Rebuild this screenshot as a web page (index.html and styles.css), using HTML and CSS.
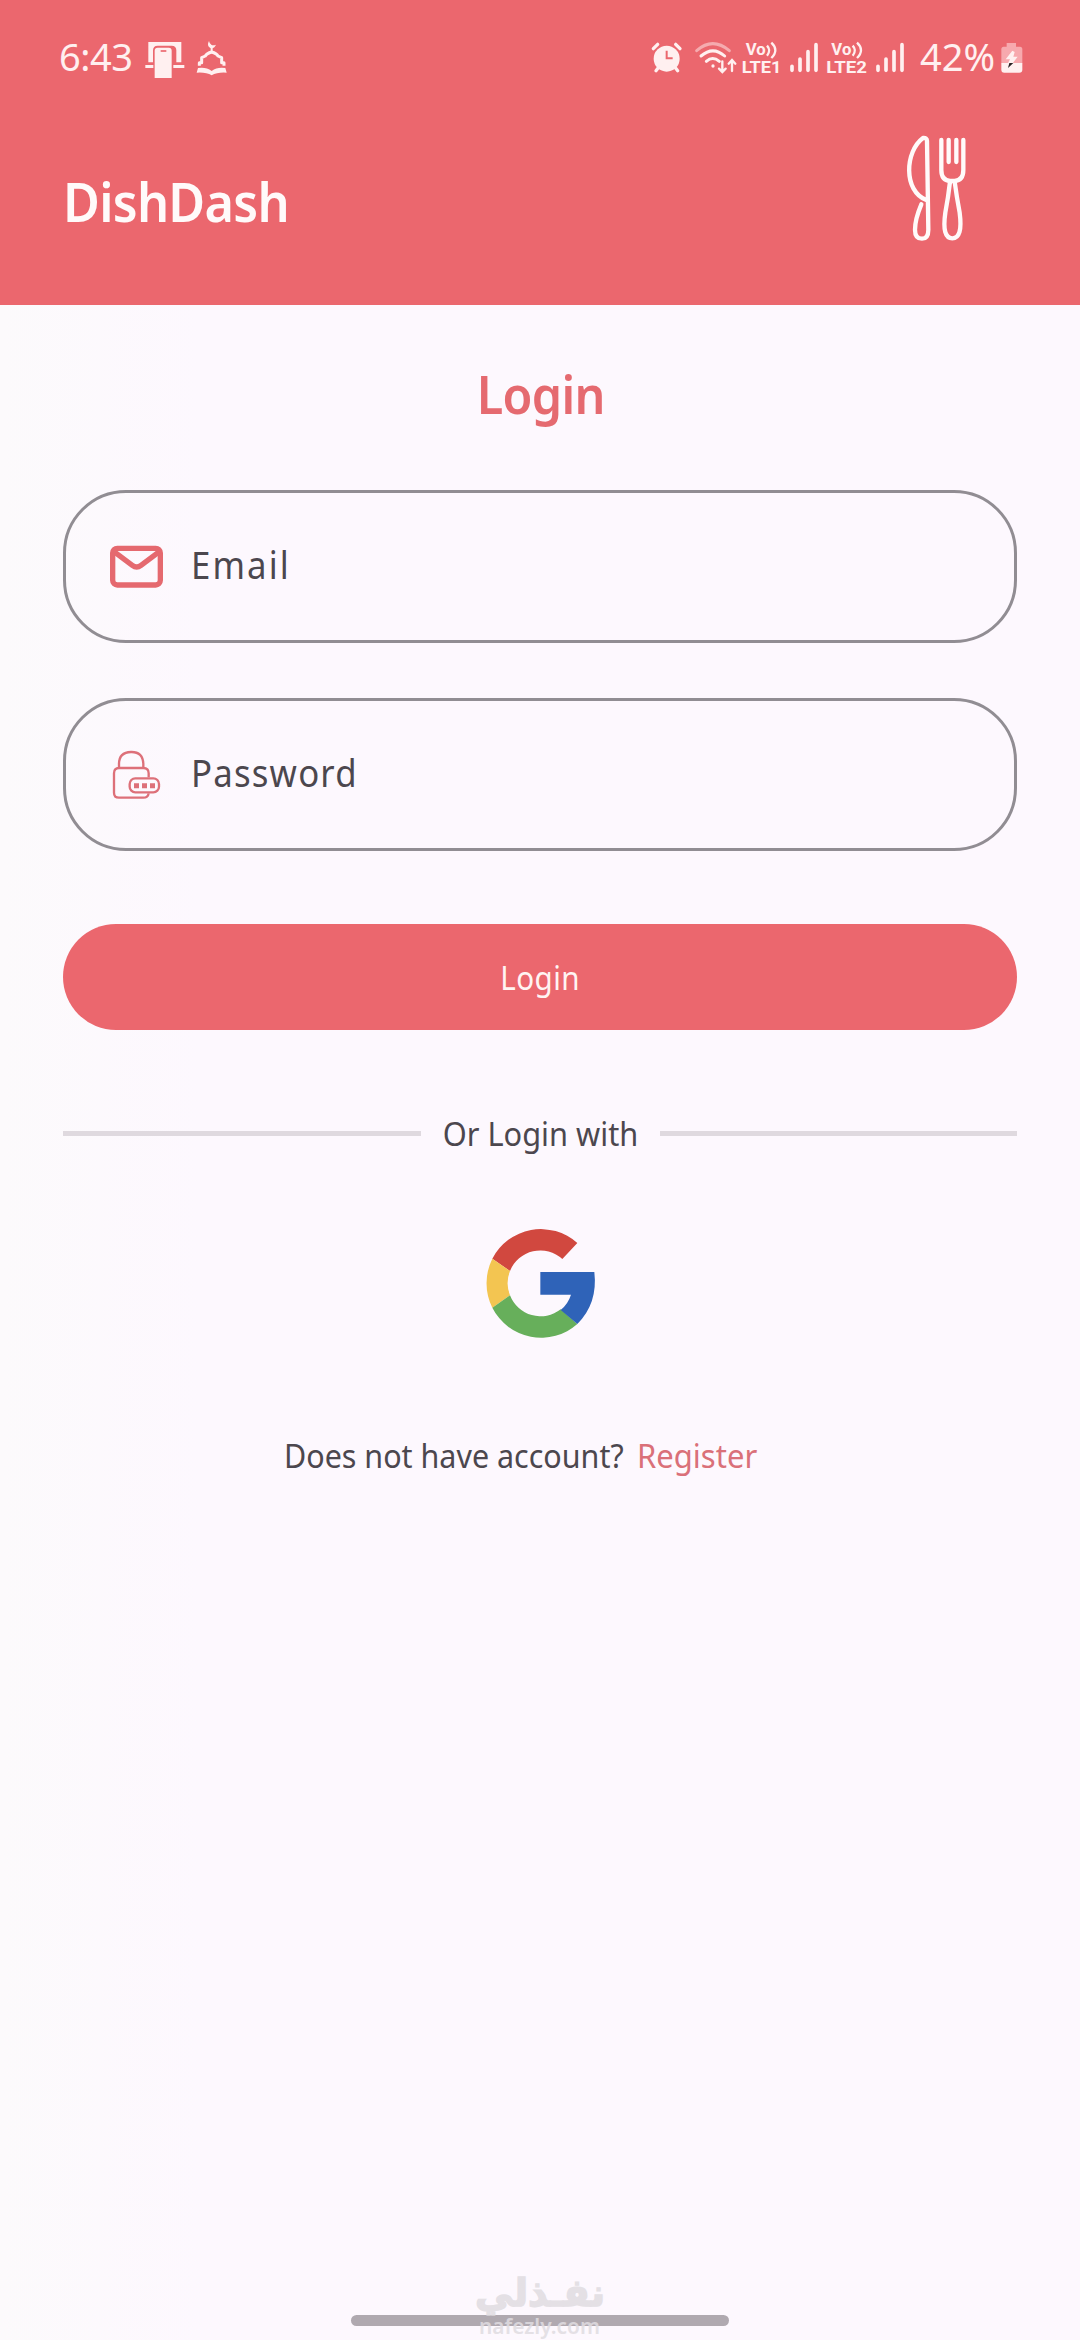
FILE: index.html
```html
<!DOCTYPE html>
<html lang="en">
<head>
<meta charset="utf-8">
<title>DishDash</title>
<link rel="stylesheet" href="styles.css">
</head>
<body>
<div class="screen">
  <header class="top">
    <div class="status">
      <span class="clock">6:43</span>
      <svg class="s-phone" width="46" height="80" viewBox="308 0 138 240">
        <path d="M324 66h99v61h-15V91q0-14-14-14h-42q-14 0-14 14v36h-14z" fill="#fff0f0"/>
        <path d="M315 135h24v9h-24zM399 135h33v9h-33z" fill="#fff0f0"/>
        <path d="M343 174V92q0-9 9-9h33q9 0 9 9v82z" fill="#fff0f0"/>
        <path d="M361 93h17" stroke="#eb676e" stroke-width="5"/>
      </svg>
      <svg class="s-mosque" width="34" height="80" viewBox="464 0 102 240" fill="none" stroke="#fff0f0">
        <path d="M506 63q-8 14 4 21q11 3 17-10q-9 4-14 0q-6-4-7-11z" fill="#fff0f0" stroke="none"/>
        <path d="M514 82v18" stroke-width="6"/>
        <path d="M477 137v-9h7v-15l11-5q4-8 19-12q15 4 19 12l11 5v15h7v9" stroke-width="9" stroke-linejoin="round"/>
        <path d="M473 144q24-4 41 9q17-13 41-9l4 14q-28-2-45 8q-17-10-45-8z" fill="#fff0f0" stroke="none"/>
      </svg>
      <span class="spacer"></span>
      <svg width="34" height="80" viewBox="57 0 102 240">
        <circle cx="107" cy="116" r="39" fill="#fff0f0"/>
        <path d="M67 86L80 73M147 86L134 73M75 152l8-10M140 152l-8-10" stroke="#fff0f0" stroke-width="10" stroke-linecap="round"/>
        <path d="M107 92v23h18" fill="none" stroke="#eb676e" stroke-width="6"/>
      </svg>
      <svg class="s-wifi" width="46" height="80" viewBox="186 0 138 240" fill="none" stroke="#fff0f0" stroke-linecap="round">
        <path d="M197 92q48-42 98 0" stroke-width="9" opacity=".5"/>
        <path d="M210 108q36-31 71 0M226 124q19-17 39 0" stroke-width="9"/>
        <circle cx="246" cy="138" r="5" fill="#fff0f0" stroke="none"/>
        <path d="M274 124v30M264 146l10 10l10-10M303 153v-32M293 131l10-11l10 11" stroke-width="7"/>
      </svg>
      <svg class="s-lte" width="44" height="80" viewBox="327 0 132 240">
        <g class="volte">
        <text x="344" y="106" textLength="60" lengthAdjust="spacingAndGlyphs">Vo</text>
        <text x="332" y="159" textLength="119" lengthAdjust="spacingAndGlyphs">LTE1</text>
        </g>
        <path d="M408 77q13 14 0 30M421 68q24 22 0 46" fill="none" stroke="#fff0f0" stroke-width="7"/>
      </svg>
      <svg class="s-sig" width="30" height="80" viewBox="474 0 90 240">
        <path d="M483 139v12M507 117v34M531 95v56M555 74v77" stroke="#fff0f0" stroke-width="11" stroke-linecap="round"/>
      </svg>
      <svg class="s-lte2" width="44" height="80" viewBox="327 0 132 240">
        <g class="volte">
        <text x="346" y="106" textLength="60" lengthAdjust="spacingAndGlyphs">Vo</text>
        <text x="331" y="159" textLength="122" lengthAdjust="spacingAndGlyphs">LTE2</text>
        </g>
        <path d="M410 77q13 14 0 30M423 68q24 22 0 46" fill="none" stroke="#fff0f0" stroke-width="7"/>
      </svg>
      <svg class="s-sig second" width="30" height="80" viewBox="474 0 90 240">
        <path d="M483 139v12M507 117v34M531 95v56M555 74v77" stroke="#fff0f0" stroke-width="11" stroke-linecap="round"/>
      </svg>
      <span class="percent">42%</span>
      <svg class="s-bat" width="24" height="80" viewBox="1106 0 72 240">
        <path d="M1126 69h28v11h12q7 0 7 8v42h-63V88q0-8 7-8h9z" fill="#f7a9ae"/>
        <path d="M1110 129h63v20q0 9-9 9h-45q-9 0-9-9z" fill="#fff0f0"/>
        <path d="M1143 92l-20 26h13l-6 12h14l15-20h-13l4-14z" fill="#fff0f0"/>
        <path d="M1134 129h12l-16 15z" fill="#2a2224"/>
      </svg>
    </div>
    <div class="brand">
      <span class="name">DishDash</span>
      <svg class="cutlery" width="110" height="140" viewBox="0 0 330 420" fill="none" stroke="#fffafa" stroke-width="13" stroke-linecap="round" stroke-linejoin="round">
        <path d="M121 253q-19 45-19 76q0 27 21 27q19 0 19-27L138 62q0-9-12-8C72 94 66 213 136 240"/>
        <path d="M181 60v90q0 31 26 33h14q26-2 26-33V60M203 60v66M226 60v66"/>
        <path d="M207 185q-5 45-14 93q-11 77 21 77t22-77q-9-48-15-93"/>
      </svg>
    </div>
  </header>

  <main class="content">
    <h1 class="title"><span>Login</span></h1>
    <div class="field">
      <svg width="80" height="80" viewBox="150 140 240 240" fill="none" stroke="#e5696f" stroke-width="16" stroke-linejoin="round">
        <rect x="188" y="204" width="143" height="110" rx="14"/>
        <path d="M191 213l56 42q13 10 26 0l56-42"/>
      </svg>
      <span class="label email">Email</span>
    </div>
    <div class="field">
      <svg width="80" height="80" viewBox="150 134 240 240" fill="none" stroke="#dd7079" stroke-width="7">
        <path d="M207 231v-10q0-35 36-36t37 36v10"/>
        <path d="M240 322h-33q-15 0-15-15v-58q0-16 15-16h73q16 0 16 16v12M296 309q-2 13-16 13h-42"/>
        <rect x="239" y="264" width="88" height="42" rx="17"/>
        <path d="M252 286h15M276 286h15M300 286h15" stroke-width="15"/>
      </svg>
      <span class="label password">Password</span>
    </div>
    <button class="submit"><span>Login</span></button>
    <div class="divider"><span class="or">Or Login with</span></div>
    <svg class="google" width="140" height="140" viewBox="0 0 420 420">
      <path d="M322 99A164 164 0 0 0 67 146L120 183A98 98 0 0 1 277 147z" fill="#d1483f"/>
      <path d="M67 146A164 164 0 0 0 67 293L120 256A98 98 0 0 1 120 183z" fill="#f3c551"/>
      <path d="M67 293A164 164 0 0 0 322 342L272 298A98 98 0 0 1 120 256z" fill="#67af5b"/>
      <path d="M211 186H373Q384 280 322 342L272 300Q294 282 303 254H211z" fill="#2f63b8"/>
    </svg>
    <p class="register"><span class="ask">Does not have account?</span><a class="link">Register</a></p>
  </main>

  <div class="home">
    <div class="bar"></div>
    <svg class="watermark" width="140" height="74" viewBox="0 0 140 74">
      <text class="wm-ar" x="135" y="40" textLength="130" lengthAdjust="spacingAndGlyphs" direction="rtl">نفـذلي</text>
      <text class="wm-en" x="9" y="68" textLength="121" lengthAdjust="spacingAndGlyphs">nafezly.com</text>
    </svg>
  </div>
</div>
</body>
</html>
```
FILE: styles.css
```css
* { box-sizing: border-box; }
body { margin: 0; font-family: "Noto Sans", sans-serif; }
svg { display: block; flex: none; }
.screen {
  width: 1080px; height: 2340px; overflow: hidden;
  display: flex; flex-direction: column;
  background: linear-gradient(90deg, #fcfafc 0, #fdf8fe 200px);
}
.top { height: 305px; background: #eb676e; padding-top: 20px; }
.status { display: flex; height: 80px; padding: 0 56px 0 59px; color: #fff0f0; font-size: 38px; line-height: 73px; }
.clock { width: 83.7px; }
.clock, .percent { white-space: nowrap; }
.clock { letter-spacing: -0.5px; }
.s-mosque { margin-left: 6px; }
.spacer { flex: 1; }
.s-wifi { margin-left: 9px; }
.s-lte { margin-left: 1px; }
.s-sig { margin-left: 5px; }
.s-lte2 { margin-left: 6px; }
.second { margin-left: 6px; }
.percent { width: 80px; margin-left: 15px; }
.volte { font: 700 50px Roboto, sans-serif; fill: #fff0f0; }
.brand { display: flex; justify-content: space-between; padding: 20px 89px 0 63px; }
.name { margin-top: 41px; height: 80px; line-height: 80px; font-size: 54px; font-weight: 600; color: #fffafa; letter-spacing: -0.8px; transform: scaleX(.935); transform-origin: left; }
.content { padding: 49px 63px 0; flex: 1; }
.title { margin: 0 0 56px; text-align: center; font-size: 53px; line-height: 80px; font-weight: 600; color: #e56a70; letter-spacing: -0.8px; }
.title span { display: inline-block; padding-left: 2px; transform: scaleX(.915); }
.field { display: flex; align-items: center; height: 153px; border: 3px solid #918d93; border-radius: 63px; padding-left: 34px; margin-bottom: 55px; }
.label { margin-left: 10.5px; padding-bottom: 5px; font-size: 38px; color: #4c474e; letter-spacing: 1.3px; transform: scaleX(.915); transform-origin: left; }
.email { letter-spacing: 2.3px; }
.submit { display: block; width: 100%; height: 106px; margin-top: 73px; border: 0; padding: 2px 0 0; border-radius: 53px; background: #eb676e; color: #fff4f3; font: 400 32px/104px "Noto Sans", sans-serif; }
.submit span { display: inline-block; letter-spacing: .5px; transform: scaleX(.925); }
.divider { display: flex; align-items: center; height: 50px; margin-top: 78px; }
.divider::before, .divider::after { content: ""; flex: 1; height: 5px; background: #dfd9df; margin-top: 1px; }
.or { width: 239px; text-align: center; font-size: 33px; line-height: 48px; padding-top: 2px; color: #4c474e; white-space: nowrap; transform: scaleX(.932); }
.google { margin: 52px auto 0 407px; }
.register { display: flex; margin: 76px 0 0; padding-left: 221px; font-size: 33px; line-height: 60px; color: #4c474e; white-space: nowrap; }
.ask { width: 353px; transform: scaleX(.923); transform-origin: left; }
.link { color: #da7079; transform: scaleX(.94); transform-origin: left; }
.home { position: relative; height: 25px; }
.bar { width: 378px; height: 11px; margin: 0 auto; border-radius: 6px; background: #b0a9b0; }
.watermark { position: absolute; left: 470px; top: -49px; fill: #e0dce1; opacity: .85; }
.wm-ar { font: 700 38px "DejaVu Sans", sans-serif; stroke: #e0dce1; stroke-width: 1.5px; }
.wm-en { font: 600 21px "Noto Sans", sans-serif; }
```
